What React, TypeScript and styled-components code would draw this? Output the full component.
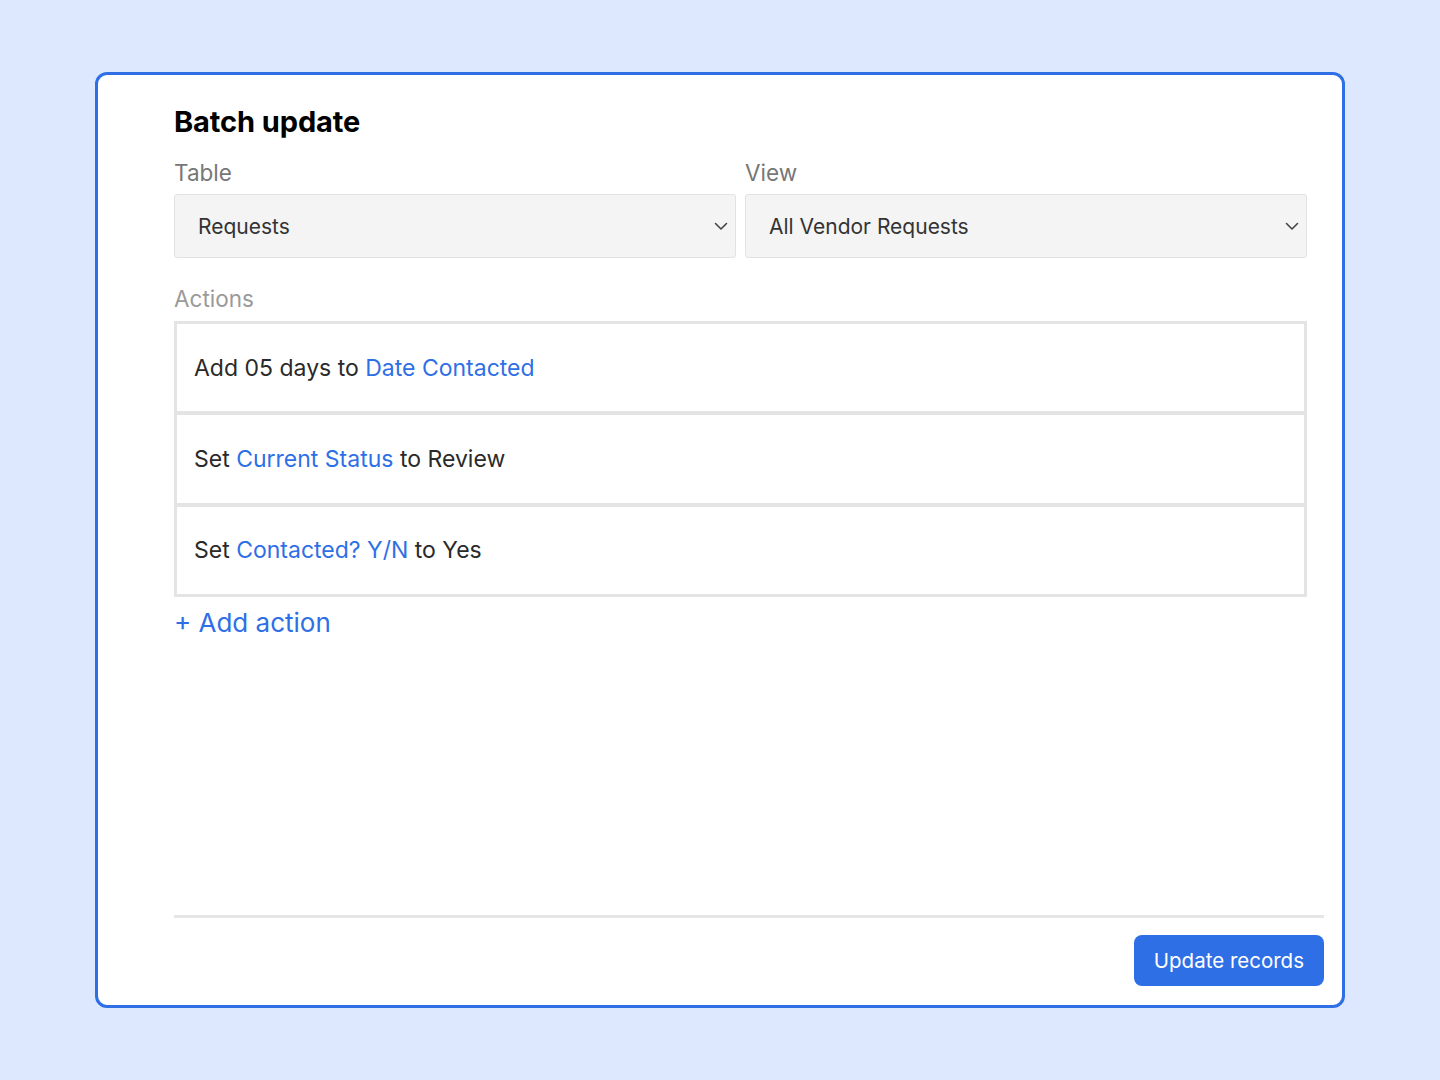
import React from "react";
import styled, { createGlobalStyle } from "styled-components";

const Global = createGlobalStyle`
  html, body { margin: 0; padding: 0; background: #dde7fd; }
  body { font-family: Inter, "Liberation Sans", sans-serif; -webkit-font-smoothing: antialiased; }
  * { box-sizing: border-box; }
`;

const Page = styled.div`
  padding: 72px 95px;
  min-height: 1080px;
`;

const Card = styled.div`
  height: 936px;
  background: #fff;
  border: 3px solid #2f6fe6;
  border-radius: 12px;
  display: flex;
  flex-direction: column;
  padding: 0 18px 19px 76px;
`;

const Main = styled.div`
  flex: 1;
  padding: 29px 17px 0 0;
  display: flex;
  flex-direction: column;
`;

const Title = styled.h1`
  margin: 0;
  font-size: 29px;
  line-height: 36px;
  font-weight: 700;
  color: #000;
  letter-spacing: -0.1px;
`;

const Row = styled.div`
  display: grid;
  grid-template-columns: 1fr 1fr;
  gap: 9px;
  margin-top: 20px;
`;

const Field = styled.div`
  display: flex;
  flex-direction: column;
`;

const Label = styled.div<{ $muted?: boolean }>`
  font-size: 22.5px;
  line-height: 26px;
  color: ${(p) => (p.$muted ? "#9a9a9a" : "#777")};
  margin-bottom: ${(p) => (p.$muted ? "9px" : "8px")};
`;

const Select = styled.div`
  height: 64px;
  background: #f4f4f4;
  border: 1px solid #e2e2e2;
  border-radius: 3px;
  display: flex;
  align-items: center;
  justify-content: space-between;
  padding: 0 6px 0 23px;
  font-size: 21px;
  color: #333;
`;

const Chevron = () => (
  <svg width="16" height="10" viewBox="0 0 16 10" fill="none">
    <path d="M2.5 2.5 L8 8 L13.5 2.5" stroke="#444" strokeWidth="1.6" strokeLinecap="round" strokeLinejoin="round" />
  </svg>
);

const ActionsSection = styled.div`
  margin-top: 28px;
`;

const ActionList = styled.div`
  border: 3px solid #e4e4e4;
`;

const ActionItem = styled.div`
  box-sizing: content-box;
  height: 87.3px;
  display: flex;
  align-items: center;
  padding: 0 17px;
  font-size: 23px;
  color: #2a2a2a;
  & + & {
    border-top: 4px solid #e4e4e4;
  }
`;

const FieldName = styled.span`
  color: #2f6fe6;
`;

const AddAction = styled.button`
  margin-top: 10px;
  align-self: flex-start;
  background: none;
  border: none;
  padding: 0;
  font-family: inherit;
  font-size: 26px;
  line-height: 32px;
  color: #2f6fe6;
  cursor: pointer;
`;

const Footer = styled.div`
  border-top: 3px solid #e6e6e6;
  padding-top: 17px;
  display: flex;
  justify-content: flex-end;
`;

const Button = styled.button`
  height: 51px;
  padding: 0 20px;
  background: #2f6fe6;
  color: #fff;
  border: none;
  border-radius: 8px;
  font-family: inherit;
  font-size: 20.5px;
  cursor: pointer;
`;

export default function App() {
  return (
    <>
      <Global />
      <Page>
        <Card>
          <Main>
            <Title>Batch update</Title>
            <Row>
              <Field>
                <Label>Table</Label>
                <Select>
                  <span>Requests</span>
                  <Chevron />
                </Select>
              </Field>
              <Field>
                <Label>View</Label>
                <Select>
                  <span>All Vendor Requests</span>
                  <Chevron />
                </Select>
              </Field>
            </Row>
            <ActionsSection>
              <Label $muted>Actions</Label>
              <ActionList>
                <ActionItem>
                  Add 05 days to&nbsp;<FieldName>Date Contacted</FieldName>
                </ActionItem>
                <ActionItem>
                  Set&nbsp;<FieldName>Current Status</FieldName>&nbsp;to Review
                </ActionItem>
                <ActionItem>
                  Set&nbsp;<FieldName>Contacted? Y/N</FieldName>&nbsp;to Yes
                </ActionItem>
              </ActionList>
            </ActionsSection>
            <AddAction>+ Add action</AddAction>
          </Main>
          <Footer>
            <Button>Update records</Button>
          </Footer>
        </Card>
      </Page>
    </>
  );
}
